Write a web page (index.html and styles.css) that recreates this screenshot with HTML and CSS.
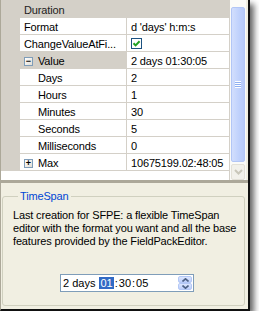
FILE: index.html
```html
<!DOCTYPE html>
<html>
<head>
  <title>TimeSpan editor</title>
  <link rel="stylesheet" href="styles.css">
</head>
<body>
  <div class="window">
    <div class="grid">
      <div class="rows">
        <div class="row category">
          <span class="margin"></span>
          <span class="name">Duration</span>
        </div>
        <div class="row">
          <span class="margin"></span>
          <span class="name">Format</span>
          <span class="value">d 'days' h:m:s</span>
        </div>
        <div class="row">
          <span class="margin"></span>
          <span class="name">ChangeValueAtFi...</span>
          <span class="value">
            <span class="check">
              <svg width="9" height="9" viewBox="0 0 9 9"><path d="M1.5 4.2 L3.6 6.4 L7.6 2.2" fill="none" stroke="#21a121" stroke-width="2"/></svg>
            </span>
          </span>
        </div>
        <div class="row selected">
          <span class="margin"></span>
          <span class="name"><span class="toggle">&minus;</span>Value</span>
          <span class="value">2 days 01:30:05</span>
        </div>
        <div class="row">
          <span class="margin"></span>
          <span class="name child">Days</span>
          <span class="value">2</span>
        </div>
        <div class="row">
          <span class="margin"></span>
          <span class="name child">Hours</span>
          <span class="value">1</span>
        </div>
        <div class="row">
          <span class="margin"></span>
          <span class="name child">Minutes</span>
          <span class="value">30</span>
        </div>
        <div class="row">
          <span class="margin"></span>
          <span class="name child">Seconds</span>
          <span class="value">5</span>
        </div>
        <div class="row">
          <span class="margin"></span>
          <span class="name child">Milliseconds</span>
          <span class="value">0</span>
        </div>
        <div class="row">
          <span class="margin"></span>
          <span class="name"><span class="toggle">+</span>Max</span>
          <span class="value">10675199.02:48:05</span>
        </div>
      </div>
      <div class="scrollbar">
        <div class="track"></div>
        <div class="thumb">
          <span class="grip"></span>
        </div>
        <div class="down-btn">
          <svg width="9" height="6" viewBox="0 0 9 6"><path d="M1 1 L4.5 4.5 L8 1" fill="none" stroke="#c9c7ba" stroke-width="2"/></svg>
        </div>
      </div>
    </div>

    <div class="help">
      <fieldset class="group">
        <legend>TimeSpan</legend>
        <p>Last creation for SFPE: a flexible TimeSpan editor with the format you want and all the base features provided by the FieldPackEditor.</p>
        <div class="editor">
          <span class="editor-text">2 days <span class="sel">01</span><span class="sep">:</span>30<span class="sep">:</span>05</span>
          <span class="spinner">
            <span class="spin-half">
              <svg width="7" height="4" viewBox="0 0 7 4"><path d="M0.5 3.5 L3.5 0.8 L6.5 3.5" fill="none" stroke="#4d6185" stroke-width="1.6"/></svg>
            </span>
            <span class="spin-half">
              <svg width="7" height="4" viewBox="0 0 7 4"><path d="M0.5 0.5 L3.5 3.2 L6.5 0.5" fill="none" stroke="#4d6185" stroke-width="1.6"/></svg>
            </span>
          </span>
        </div>
      </fieldset>
    </div>
  </div>
</body>
</html>
```

FILE: styles.css
```css
body {
  margin: 0;
  background: #fff;
  font-family: "Liberation Sans", Arial, sans-serif;
  font-size: 11px;
  letter-spacing: -0.15px;
  color: #000;
}

.window {
  width: 247px;
  height: 309px;
  border-left: 1px solid #aca899;
  border-right: 2px solid #111;
  border-bottom: 2px solid #111;
  box-shadow: 4px 4px 6px rgba(0, 0, 0, 0.6);
  display: flex;
  flex-direction: column;
}

/* property grid */
.grid {
  display: flex;
  height: 180px;
  background: #fff;
}

.rows {
  width: 228px;
  border-top: 1px solid #d4d0c8;
  border-right: 1px solid #d4d0c8;
}

.row {
  display: flex;
  height: 17px;
}

.margin {
  width: 19px;
  background: #d4d0c8;
}

.name,
.value {
  height: 17px;
  box-sizing: border-box;
  padding-top: 1px;
  line-height: 16px;
  border-bottom: 1px solid #d4d0c8;
  white-space: nowrap;
  overflow: hidden;
}

.name {
  width: 107px;
  padding-left: 4px;
  border-right: 1px solid #d4d0c8;
  display: flex;
  align-items: flex-start;
}

.name.child {
  padding-left: 18px;
}

.value {
  flex: 1;
  padding-left: 4px;
}

.category .name {
  flex: 1;
  width: auto;
  border-right: none;
  background: #d4d0c8;
  color: #222;
}

.selected .name {
  background: #d4d0c8;
}

.toggle {
  width: 7px;
  height: 7px;
  margin: 4px 5px 0 0;
  border: 1px solid #7f9db9;
  background: linear-gradient(135deg, #fff, #e2ded5);
  font-size: 9px;
  line-height: 7px;
  text-align: center;
  font-weight: bold;
  letter-spacing: 0;
}

.check {
  display: inline-flex;
  align-items: center;
  justify-content: center;
  width: 9px;
  height: 9px;
  margin-top: 2px;
  border: 1px solid #1c5180;
  background: #fff;
  vertical-align: top;
}

/* xp style scrollbar */
.scrollbar {
  width: 16px;
  display: flex;
  flex-direction: column;
  background: #fbfbf8;
  border-right: 2px solid #f1efe2;
}

.track {
  height: 7px;
}

.thumb {
  height: 155px;
  margin: 0 1px;
  border: 1px solid #b2c6f6;
  border-radius: 2px;
  background: linear-gradient(to right, #d2defd, #bfd1fc 60%, #b6c9f8);
  display: flex;
  align-items: center;
  justify-content: center;
}

.grip {
  width: 6px;
  height: 7px;
  background: repeating-linear-gradient(to bottom, #fff 0, #fff 1px, #8fb0f2 1px, #8fb0f2 2px);
}

.down-btn {
  height: 14px;
  margin: 2px 1px 0;
  border: 1px solid #e3e1d8;
  border-radius: 2px;
  background: #f2f1eb;
  display: flex;
  align-items: center;
  justify-content: center;
}

/* help panel */
.help {
  flex: 1;
  border-top: 3px solid #aca899;
  background: #f1efe2;
  padding: 7px 3px 3px 1px;
  display: flex;
}

.group {
  flex: 1;
  margin: 0;
  padding: 6px 4px 0 10px;
  border: 1px solid #d0d0bf;
  border-radius: 3px;
}

.group legend {
  margin-left: 5px;
  padding: 0 2px;
  color: #0046d5;
  line-height: 13px;
}

.group p {
  margin: 0;
  line-height: 13px;
}

.editor {
  display: flex;
  align-items: center;
  width: 132px;
  height: 16px;
  margin: 26px 0 0 47px;
  border: 1px solid #7f9db9;
  background: #fff;
}

.editor-text {
  padding-left: 2px;
  line-height: 13px;
  letter-spacing: 0;
}

.sel {
  margin-left: 1px;
  padding: 0 1px;
  background: #316ac5;
  color: #fff;
}

.sep {
  padding: 0 1px;
}

.spinner {
  margin-left: auto;
  margin-right: 1px;
  width: 14px;
  height: 14px;
  display: flex;
  flex-direction: column;
}

.spin-half {
  flex: 1;
  display: flex;
  align-items: center;
  justify-content: center;
  border: 1px solid #b4c8f6;
  border-radius: 2px;
  background: linear-gradient(to bottom, #dce6fe, #bccefa);
}
```
